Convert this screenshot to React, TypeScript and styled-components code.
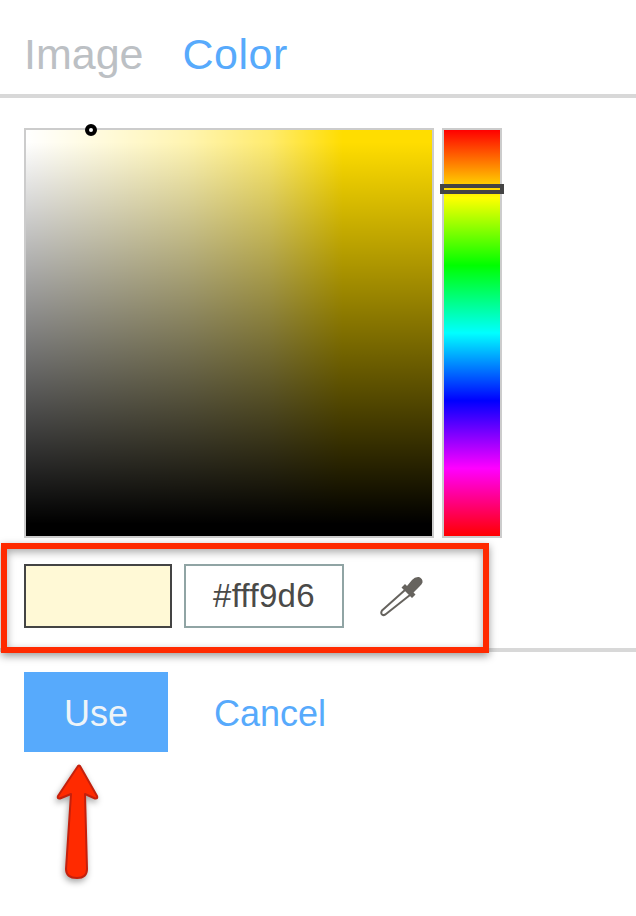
import React from 'react';
import styled, { createGlobalStyle } from 'styled-components';

const GlobalStyle = createGlobalStyle`
  html, body {
    margin: 0;
    padding: 0;
    background: #ffffff;
  }
`;

const App: React.FC = () => {
  return (
    <Page>
      <GlobalStyle />
      <Tabs>
        <Tab>Image</Tab>
        <Tab active>Color</Tab>
      </Tabs>

      <PickerRow>
        <SatBox>
          <SatMarker />
        </SatBox>
        <HueBar>
          <HueHandle />
        </HueBar>
      </PickerRow>

      <ValueRow>
        <Swatch color="#fff9d6" />
        <HexInput>#fff9d6</HexInput>
        <DropperButton>
          <svg width="46" height="46" viewBox="0 0 46 46" fill="none">
            <path
              d="M25 17 L2 37.5 Q0.5 40 2 41.5 Q4 43 6 41 L30 22"
              stroke="#66635e"
              strokeWidth="2"
              strokeLinejoin="round"
            />
            <path
              d="M21.5 14.5 L25 11 L27 13 L32 7 Q35 3.5 39 4 Q43 5.5 42.5 9.5 Q42 11 39 14 L33.5 19.5 L35.5 21.5 L32 25 Z"
              fill="#66635e"
            />
          </svg>
        </DropperButton>
      </ValueRow>

      <Actions>
        <UseButton>Use</UseButton>
        <CancelButton>Cancel</CancelButton>
      </Actions>

      <RedFrame />
      <RedArrow width="60" height="130" viewBox="0 0 60 130">
        <path
          d="M29 7 Q30 6 31 7 L48 37 Q49 40 46 39.5 L36 35 L38 110 Q38 119 28 119 Q17 119 17 110 L22 35 L11 39.5 Q8 40 9 37 Z"
          fill="#ff2a00"
          stroke="#c4200c"
          strokeWidth="2"
          strokeLinejoin="round"
        />
      </RedArrow>
    </Page>
  );
};

const Page = styled.div`
  position: relative;
  width: 636px;
  height: 916px;
  overflow: hidden;
  background: #ffffff;
  font-family: 'Liberation Sans', Arial, sans-serif;
`;

const Tabs = styled.div`
  display: flex;
  gap: 39px;
  height: 65px;
  padding: 29px 0 0 24px;
  border-bottom: 4px solid #d8d8d8;
`;

const Tab = styled.div<{ active?: boolean }>`
  font-size: 43px;
  line-height: 50px;
  letter-spacing: ${props => (props.active ? '0.5px' : '0')};
  color: ${props => (props.active ? '#57aafc' : '#bcc0c4')};
`;

const PickerRow = styled.div`
  display: flex;
  gap: 8px;
  padding: 30px 0 0 24px;
`;

const SatBox = styled.div`
  position: relative;
  width: 406px;
  height: 406px;
  border: 2px solid #cccccc;
  background:
    linear-gradient(to bottom, rgba(0, 0, 0, 0) 3%, #000000 97%),
    linear-gradient(
      to right,
      #ffffff,
      rgba(255, 255, 255, 0.85) 20%,
      rgba(255, 255, 255, 0.69) 40%,
      rgba(255, 255, 255, 0.43) 60%,
      rgba(255, 255, 255, 0) 78%
    ),
    #ffdd00;
`;

const SatMarker = styled.div`
  position: absolute;
  left: 59px;
  top: -6px;
  width: 4px;
  height: 4px;
  border: 4px solid #000000;
  border-radius: 50%;
  background: #ffffff;
`;

const HueBar = styled.div`
  position: relative;
  width: 56px;
  height: 406px;
  border: 2px solid #cccccc;
  background: linear-gradient(
    to bottom,
    #ff0000,
    #ffff00 16.67%,
    #00ff00 33.33%,
    #00ffff 50%,
    #0000ff 66.67%,
    #ff00ff 83.33%,
    #ff0000
  );
`;

const HueHandle = styled.div`
  position: absolute;
  left: -4px;
  top: 54px;
  width: 56px;
  height: 2px;
  border: 4px solid #444444;
  background: #ffd900;
`;

const ValueRow = styled.div`
  display: flex;
  align-items: center;
  gap: 12px;
  padding: 26px 0 0 24px;
`;

const Swatch = styled.div<{ color: string }>`
  width: 144px;
  height: 60px;
  border: 2px solid #444444;
  background: ${props => props.color};
`;

const HexInput = styled.div`
  width: 156px;
  height: 60px;
  border: 2px solid #90a4a4;
  display: flex;
  align-items: center;
  justify-content: center;
  font-size: 33px;
  letter-spacing: 0.3px;
  color: #4a4a48;
`;

const DropperButton = styled.div`
  display: flex;
  margin-left: 24px;
`;

const Actions = styled.div`
  display: flex;
  align-items: center;
  gap: 46px;
  margin-top: 20px;
  padding: 20px 0 0 24px;
  border-top: 4px solid #d8d8d8;
`;

const UseButton = styled.div`
  width: 144px;
  height: 76px;
  padding-top: 4px;
  display: flex;
  align-items: center;
  justify-content: center;
  background: #57aafc;
  color: #eef4f8;
  font-size: 36px;
`;

const CancelButton = styled.div`
  color: #57aafc;
  font-size: 36px;
  padding-top: 4px;
`;

const RedFrame = styled.div`
  position: absolute;
  left: 1px;
  top: 543px;
  width: 476px;
  height: 98px;
  border: 6px solid #ff2a00;
  box-shadow:
    0 3px 8px rgba(0, 0, 0, 0.4),
    inset 0 3px 8px rgba(0, 0, 0, 0.35);
`;

const RedArrow = styled.svg`
  position: absolute;
  left: 49px;
  top: 759px;
  filter: drop-shadow(-1px 3px 3px rgba(0, 0, 0, 0.35));
`;

export default App;
